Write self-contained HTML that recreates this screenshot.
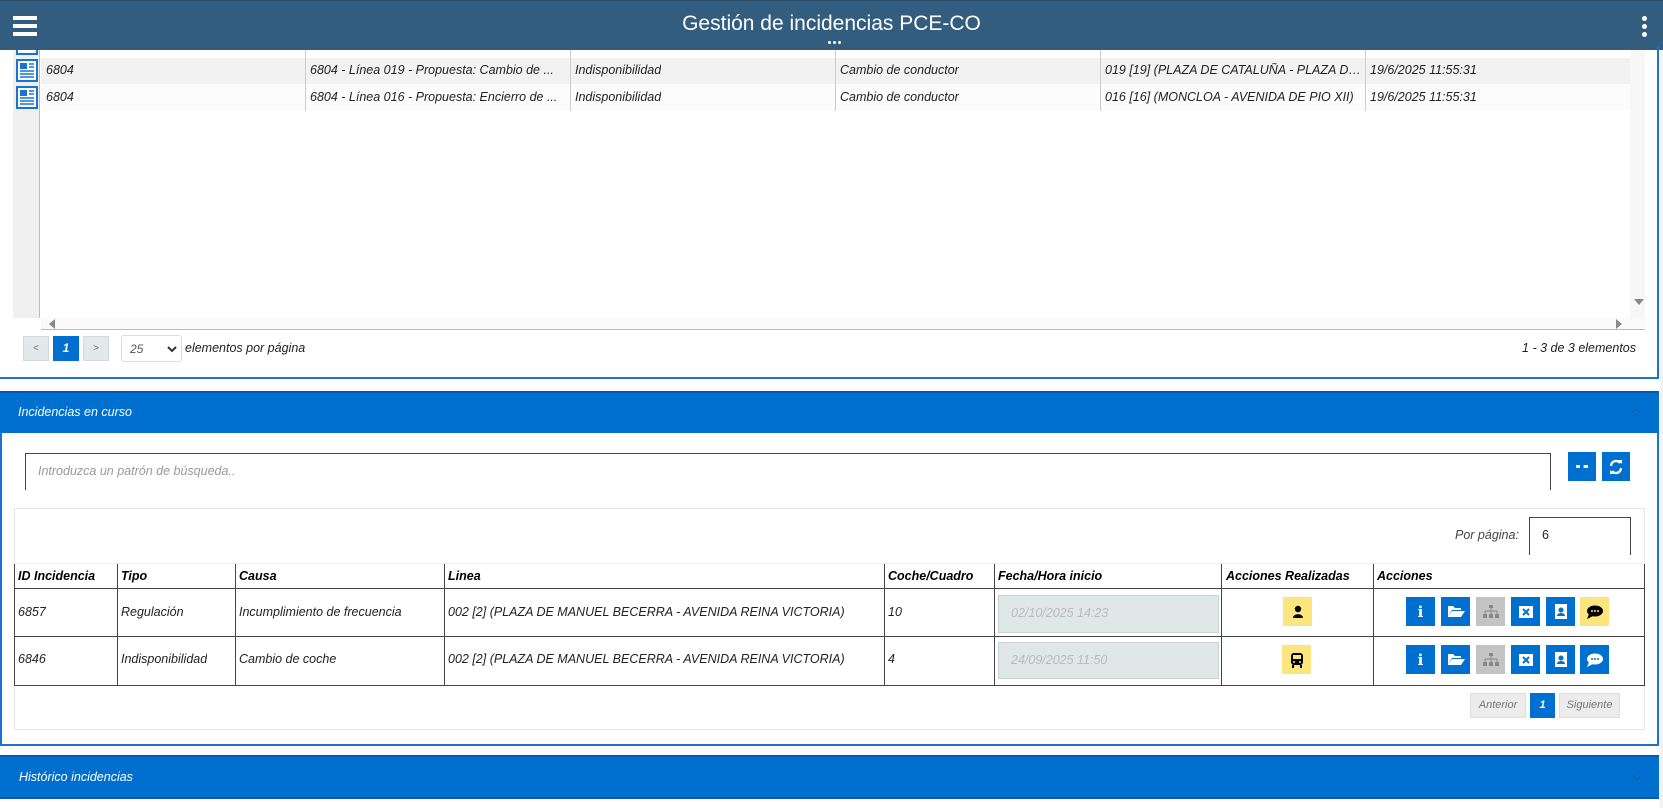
<!DOCTYPE html>
<html><head><meta charset="utf-8"><style>
*{box-sizing:border-box;margin:0;padding:0}
body{width:1663px;height:808px;position:relative;overflow:hidden;background:#fff;font-family:"Liberation Sans",sans-serif;font-style:italic;font-size:12.5px;color:#222}
.a{position:absolute}
.hdr{left:0;top:0;width:1663px;height:50px;background:#335d7f;border-top:1px solid #2a4d6a}
.t{white-space:nowrap;overflow:hidden}
.blue{background:#0070d0}
.btn{position:absolute;width:29px;height:29px;background:#0070d0;display:flex;align-items:center;justify-content:center}
.cell{position:absolute;white-space:nowrap;overflow:hidden}
.vl{position:absolute;width:1px;background:#444}
.hl{position:absolute;height:1px;background:#444}
</style></head><body>
<div class="a hdr">
 <div class="a" style="left:13px;top:15px;width:24px;height:4px;background:#fff"></div>
 <div class="a" style="left:13px;top:23px;width:24px;height:4px;background:#fff"></div>
 <div class="a" style="left:13px;top:31px;width:24px;height:4px;background:#fff"></div>
 <div class="a t" style="left:0;width:1663px;top:11px;text-align:center;color:#fff;font-style:normal;font-size:21px">Gestión de incidencias PCE-CO</div>
 <div class="a" style="left:828px;top:40px;width:3px;height:3px;border-radius:50%;background:#fff;box-shadow:5px 0 #fff,10px 0 #fff"></div>
 <div class="a" style="left:1642px;top:15px;width:5px;height:5px;border-radius:50%;background:#fff;box-shadow:0 8px #fff,0 16px #fff"></div>
</div>
<div class="a" style="left:13px;top:50px;width:27px;height:268px;background:#f0f0f0;border-right:1px solid #bbb"></div>
<div class="a" style="left:41px;top:58px;width:1589px;height:26px;background:#f2f2f2"></div>
<div class="a" style="left:41px;top:84px;width:1589px;height:27px;background:#fcfcfc"></div>
<div class="a" style="left:41px;top:111px;width:1590px;height:207px;background:#fff"></div>
<div class="a" style="left:1630px;top:50px;width:15px;height:268px;background:#f7f7f7"></div>
<div class="a" style="left:1634px;top:299px;width:0;height:0;border-left:5px solid transparent;border-right:5px solid transparent;border-top:6px solid #888"></div>
<div class="a" style="left:41px;top:318px;width:1604px;height:12px;background:#fafafa;border-bottom:1px solid #bbb"></div>
<div class="a" style="left:49px;top:319px;width:0;height:0;border-top:5px solid transparent;border-bottom:5px solid transparent;border-right:6px solid #888"></div>
<div class="a" style="left:1616px;top:319px;width:0;height:0;border-top:5px solid transparent;border-bottom:5px solid transparent;border-left:6px solid #888"></div>
<svg class="a" style="left:16px;top:59px" width="22" height="23" viewBox="0 0 22 23"><rect x="1" y="1" width="20" height="21" fill="#fff" stroke="#1a73d0" stroke-width="2"/><rect x="4" y="4" width="7" height="6" fill="#1a73d0"/><path d="M13 5h5M13 8h5M4 12h14M4 15h14M4 18h14" stroke="#1a73d0" stroke-width="1.5"/></svg>
<svg class="a" style="left:16px;top:86px" width="22" height="23" viewBox="0 0 22 23"><rect x="1" y="1" width="20" height="21" fill="#fff" stroke="#1a73d0" stroke-width="2"/><rect x="4" y="4" width="7" height="6" fill="#1a73d0"/><path d="M13 5h5M13 8h5M4 12h14M4 15h14M4 18h14" stroke="#1a73d0" stroke-width="1.5"/></svg>
<div class="a" style="left:16px;top:50px;width:22px;height:5px;border:2px solid #1a73d0;border-top:none;background:#fff"></div>
<div class="a" style="left:305px;top:50px;width:1px;height:61px;background:#ccc"></div>
<div class="a" style="left:570px;top:50px;width:1px;height:61px;background:#ccc"></div>
<div class="a" style="left:835px;top:50px;width:1px;height:61px;background:#ccc"></div>
<div class="a" style="left:1100px;top:50px;width:1px;height:61px;background:#ccc"></div>
<div class="a" style="left:1365px;top:50px;width:1px;height:61px;background:#ccc"></div>
<div class="cell" style="left:46px;top:63px">6804</div>
<div class="cell" style="left:310px;top:63px">6804 - Línea 019 - Propuesta: Cambio de ...</div>
<div class="cell" style="left:575px;top:63px">Indisponibilidad</div>
<div class="cell" style="left:840px;top:63px">Cambio de conductor</div>
<div class="cell" style="left:1105px;top:63px;width:256px;text-overflow:ellipsis">019 [19] (PLAZA DE CATALUÑA - PLAZA DE PLAZA</div>
<div class="cell" style="left:1370px;top:63px">19/6/2025 11:55:31</div>
<div class="cell" style="left:46px;top:90px">6804</div>
<div class="cell" style="left:310px;top:90px">6804 - Línea 016 - Propuesta: Encierro de ...</div>
<div class="cell" style="left:575px;top:90px">Indisponibilidad</div>
<div class="cell" style="left:840px;top:90px">Cambio de conductor</div>
<div class="cell" style="left:1105px;top:90px;width:256px">016 [16] (MONCLOA - AVENIDA DE PIO XII)</div>
<div class="cell" style="left:1370px;top:90px">19/6/2025 11:55:31</div>
<div class="a" style="left:23px;top:336px;width:26px;height:25px;background:#e3e8ea;border:1px solid #d4d9db;color:#777;font-size:10px;text-align:center;line-height:23px;font-style:normal">&lt;</div>
<div class="a blue" style="left:53px;top:336px;width:26px;height:25px;color:#fff;font-weight:bold;text-align:center;line-height:25px;font-size:12px">1</div>
<div class="a" style="left:83px;top:336px;width:26px;height:25px;background:#e3e8ea;border:1px solid #d4d9db;color:#777;font-size:10px;text-align:center;line-height:23px;font-style:normal">&gt;</div>
<div class="a" style="left:121px;top:335px;width:61px;height:27px;border:1px solid #ddd;border-radius:3px;color:#555;font-size:12px;padding:6px 0 0 8px">25<svg class="a" style="left:45px;top:10px" width="10" height="7"><path d="M1 1l4 4 4-4" stroke="#333" stroke-width="2" fill="none"/></svg></div>
<div class="cell" style="left:185px;top:341px">elementos por página</div>
<div class="cell" style="left:1460px;top:341px;width:176px;text-align:right">1 - 3 de 3 elementos</div>
<div class="a" style="left:0;top:377px;width:1658px;height:2px;background:#1a73d0"></div>
<div class="a" style="left:1657px;top:46px;width:2px;height:333px;background:#1a73d0"></div>
<div class="a blue" style="left:0;top:391px;width:1659px;height:42px;border-top:2px solid #005bb0"></div>
<div class="cell" style="left:18px;top:405px;color:#fff">Incidencias en curso</div>
<svg class="a" style="left:1630px;top:408px" width="12" height="7"><path d="M1 6l5-5 5 5" stroke="#1e5a99" stroke-width="1" fill="none"/></svg>
<div class="a" style="left:0;top:433px;width:1659px;height:313px;border:2px solid #1a73d0;border-top:none"></div>
<div class="a" style="left:25px;top:453px;width:1526px;height:37px;border:1px solid #444;border-bottom:none"></div>
<div class="cell" style="left:38px;top:464px;color:#999">Introduzca un patrón de búsqueda..</div>
<div class="btn" style="left:1568px;top:452px;width:28px;height:29px"><div style="width:12px;height:3px;border-top:3px dotted #fff"></div></div>
<div class="btn" style="left:1602px;top:452px;width:28px;height:29px"><svg width="16" height="16" viewBox="0 0 16 16"><path d="M3 7a5 5 0 0 1 9-3M13 9a5 5 0 0 1-9 3" stroke="#fff" stroke-width="2.4" fill="none"/><path d="M10 1l4 0 0 4zM6 15l-4 0 0-4z" fill="#fff"/></svg></div>
<div class="a" style="left:14px;top:508px;width:1631px;height:222px;border:1px solid #e6e6e6"></div>
<div class="cell" style="left:1455px;top:528px;color:#444">Por página:</div>
<div class="a" style="left:1529px;top:517px;width:102px;height:38px;border:1px solid #444;border-bottom:none"></div>
<div class="cell" style="left:1542px;top:528px;font-style:normal">6</div>
<div class="a" style="left:14px;top:563px;width:1631px;height:1px;background:#eee"></div>
<div class="hl" style="left:14px;top:588px;width:1631px"></div>
<div class="hl" style="left:14px;top:636px;width:1631px"></div>
<div class="hl" style="left:14px;top:685px;width:1631px"></div>
<div class="vl" style="left:14px;top:564px;height:121px"></div>
<div class="vl" style="left:117px;top:564px;height:121px"></div>
<div class="vl" style="left:235px;top:564px;height:121px"></div>
<div class="vl" style="left:444px;top:564px;height:121px"></div>
<div class="vl" style="left:884px;top:564px;height:121px"></div>
<div class="vl" style="left:994px;top:564px;height:121px"></div>
<div class="vl" style="left:1221px;top:564px;height:121px"></div>
<div class="vl" style="left:1373px;top:564px;height:121px"></div>
<div class="vl" style="left:1644px;top:564px;height:121px"></div>
<div style="font-weight:bold;color:#000">
<div class="cell" style="left:18px;top:569px">ID Incidencia</div>
<div class="cell" style="left:121px;top:569px">Tipo</div>
<div class="cell" style="left:239px;top:569px">Causa</div>
<div class="cell" style="left:448px;top:569px">Linea</div>
<div class="cell" style="left:888px;top:569px">Coche/Cuadro</div>
<div class="cell" style="left:998px;top:569px">Fecha/Hora inicio</div>
<div class="cell" style="left:1226px;top:569px">Acciones Realizadas</div>
<div class="cell" style="left:1377px;top:569px">Acciones</div>
</div>
<div class="cell" style="left:18px;top:605px">6857</div>
<div class="cell" style="left:121px;top:605px">Regulación</div>
<div class="cell" style="left:239px;top:605px">Incumplimiento de frecuencia</div>
<div class="cell" style="left:448px;top:605px">002 [2] (PLAZA DE MANUEL BECERRA - AVENIDA REINA VICTORIA)</div>
<div class="cell" style="left:888px;top:605px">10</div>
<div class="a" style="left:998px;top:595px;width:221px;height:38px;background:#dfe7e7;border:1px solid #c8d2d2;color:#bbb;padding:10px 0 0 12px">02/10/2025 14:23</div>
<div class="cell" style="left:18px;top:652px">6846</div>
<div class="cell" style="left:121px;top:652px">Indisponibilidad</div>
<div class="cell" style="left:239px;top:652px">Cambio de coche</div>
<div class="cell" style="left:448px;top:652px">002 [2] (PLAZA DE MANUEL BECERRA - AVENIDA REINA VICTORIA)</div>
<div class="cell" style="left:888px;top:652px">4</div>
<div class="a" style="left:998px;top:642px;width:221px;height:37px;background:#dfe7e7;border:1px solid #c8d2d2;color:#bbb;padding:10px 0 0 12px">24/09/2025 11:50</div>
<div class="btn" style="left:1283px;top:597px;background:#fbe57c"><svg width="12" height="14" viewBox="0 0 12 14"><circle cx="6" cy="4" r="3.2" fill="#000"/><path d="M1 13c0-5 10-5 10 0z" fill="#000"/></svg></div>
<div class="btn" style="left:1282px;top:645px;background:#fbe57c"><svg width="14" height="16" viewBox="0 0 14 16"><rect x="1" y="1" width="12" height="12" rx="3" fill="#000"/><rect x="3" y="3" width="8" height="4" fill="#fbe57c"/><circle cx="4" cy="10" r="1" fill="#fbe57c"/><circle cx="10" cy="10" r="1" fill="#fbe57c"/><rect x="2" y="13" width="2" height="3" fill="#000"/><rect x="10" y="13" width="2" height="3" fill="#000"/></svg></div>
<div class="btn" style="left:1406px;top:597px"><span style="color:#fff;font-weight:bold;font-style:normal;font-family:'DejaVu Serif',serif;font-size:15px">i</span></div>
<div class="btn" style="left:1441px;top:597px"><svg width="18" height="13" viewBox="0 0 18 13"><path d="M1 1h5l2 2h6v2H5L1 12z" fill="#fff"/><path d="M5 6h13l-4 6H1z" fill="#fff"/></svg></div>
<div class="btn" style="left:1476px;top:597px;background:#c4c4c4"><svg width="16" height="13" viewBox="0 0 16 13"><rect x="6" y="0" width="4" height="3" fill="#888"/><path d="M8 3v3M2 6h12M2 6v3M8 6v3M14 6v3" stroke="#888"/><rect x="0" y="9" width="4" height="4" fill="#888"/><rect x="6" y="9" width="4" height="4" fill="#888"/><rect x="12" y="9" width="4" height="4" fill="#888"/></svg></div>
<div class="btn" style="left:1511px;top:597px"><svg width="14" height="12"><rect width="14" height="12" fill="#fff"/><path d="M4 3l6 6M10 3l-6 6" stroke="#0070d0" stroke-width="2"/></svg></div>
<div class="btn" style="left:1546px;top:597px"><svg width="12" height="15" viewBox="0 0 12 15"><rect width="12" height="15" fill="#fff"/><circle cx="6" cy="6" r="2.5" fill="#0070d0"/><path d="M2 12c0-4 8-4 8 0z" fill="#0070d0"/></svg></div>
<div class="btn" style="left:1580px;top:597px;background:#fbe57c"><svg width="18" height="14" viewBox="0 0 18 14"><ellipse cx="9" cy="6" rx="8" ry="5.5" fill="#000"/><path d="M3 9l-2 5 6-3z" fill="#000"/><circle cx="6" cy="6" r="1" fill="#fbe57c"/><circle cx="9" cy="6" r="1" fill="#fbe57c"/><circle cx="12" cy="6" r="1" fill="#fbe57c"/></svg></div>
<div class="btn" style="left:1406px;top:645px"><span style="color:#fff;font-weight:bold;font-style:normal;font-family:'DejaVu Serif',serif;font-size:15px">i</span></div>
<div class="btn" style="left:1441px;top:645px"><svg width="18" height="13" viewBox="0 0 18 13"><path d="M1 1h5l2 2h6v2H5L1 12z" fill="#fff"/><path d="M5 6h13l-4 6H1z" fill="#fff"/></svg></div>
<div class="btn" style="left:1476px;top:645px;background:#c4c4c4"><svg width="16" height="13" viewBox="0 0 16 13"><rect x="6" y="0" width="4" height="3" fill="#888"/><path d="M8 3v3M2 6h12M2 6v3M8 6v3M14 6v3" stroke="#888"/><rect x="0" y="9" width="4" height="4" fill="#888"/><rect x="6" y="9" width="4" height="4" fill="#888"/><rect x="12" y="9" width="4" height="4" fill="#888"/></svg></div>
<div class="btn" style="left:1511px;top:645px"><svg width="14" height="12"><rect width="14" height="12" fill="#fff"/><path d="M4 3l6 6M10 3l-6 6" stroke="#0070d0" stroke-width="2"/></svg></div>
<div class="btn" style="left:1546px;top:645px"><svg width="12" height="15" viewBox="0 0 12 15"><rect width="12" height="15" fill="#fff"/><circle cx="6" cy="6" r="2.5" fill="#0070d0"/><path d="M2 12c0-4 8-4 8 0z" fill="#0070d0"/></svg></div>
<div class="btn" style="left:1580px;top:645px"><svg width="18" height="14" viewBox="0 0 18 14"><ellipse cx="9" cy="6" rx="8" ry="5.5" fill="#fff"/><path d="M3 9l-2 5 6-3z" fill="#fff"/><circle cx="6" cy="6" r="1" fill="#0070d0"/><circle cx="9" cy="6" r="1" fill="#0070d0"/><circle cx="12" cy="6" r="1" fill="#0070d0"/></svg></div>
<div class="a" style="left:1470px;top:693px;width:56px;height:25px;background:#ececec;border:1px solid #ddd;color:#777;font-size:11px;text-align:center;line-height:23px">Anterior</div>
<div class="a blue" style="left:1530px;top:693px;width:25px;height:25px;color:#fff;font-weight:bold;font-size:11px;text-align:center;line-height:25px">1</div>
<div class="a" style="left:1559px;top:693px;width:61px;height:25px;background:#ececec;border:1px solid #ddd;color:#777;font-size:11px;text-align:center;line-height:23px">Siguiente</div>
<div class="a blue" style="left:0;top:755px;width:1659px;height:44px;border-top:2px solid #005bb0;border-bottom:2px solid #005bb0"></div>
<div class="cell" style="left:19px;top:770px;color:#fff">Histórico incidencias</div>
<svg class="a" style="left:1631px;top:774px" width="12" height="7"><path d="M1 1l5 5 5-5" stroke="#1e5a99" stroke-width="1" fill="none"/></svg>
<div class="a" style="left:1660px;top:50px;width:3px;height:758px;background:#f2f2f2"></div>
</body></html>
